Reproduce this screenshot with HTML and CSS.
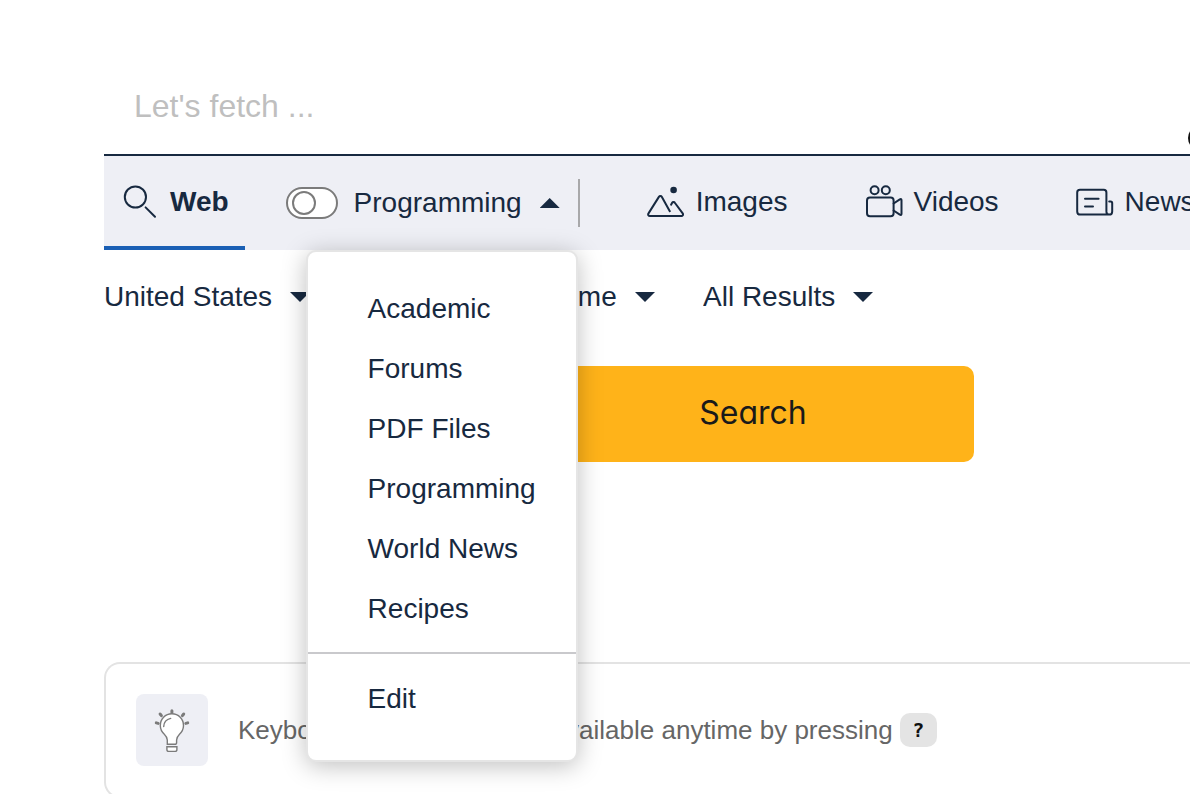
FILE: index.html
```html
<!DOCTYPE html>
<html lang="en">
<head>
<meta charset="utf-8">
<title>Search</title>
<link rel="stylesheet" href="styles.css">
</head>
<body>
<main class="page">
  <form class="search" id="search-form">
    <input class="search-input" type="text" aria-label="Search the web" placeholder="Let's fetch ...">
    <svg class="search-glyph" viewBox="0 0 24 24" aria-hidden="true"><circle cx="12" cy="12" r="10"/></svg>
  </form>

  <nav class="tabs" aria-label="Search types">
    <a class="tab tab-active" href="#web">
      <svg class="icon icon-web" viewBox="0 0 34 34" aria-hidden="true"><circle cx="12.4" cy="12" r="10.6"/><path d="M22.600 22.400l9.400 9.400"/></svg>
      <span>Web</span>
    </a>
    <div class="lens">
      <input class="switch" type="checkbox" role="switch" id="lens-switch" aria-label="Use lens">
      <button class="lens-button" type="button" aria-expanded="true" aria-controls="lens-menu">Programming <span class="caret caret-up"></span></button>
      <div class="menu" id="lens-menu">
        <ul class="menu-list">
          <li><button class="menu-item" type="button">Academic</button></li>
          <li><button class="menu-item" type="button">Forums</button></li>
          <li><button class="menu-item" type="button">PDF Files</button></li>
          <li><button class="menu-item" type="button">Programming</button></li>
          <li><button class="menu-item" type="button">World News</button></li>
          <li><button class="menu-item" type="button">Recipes</button></li>
        </ul>
        <div class="menu-footer"><button class="menu-item" type="button">Edit</button></div>
      </div>
    </div>
    <div class="tab-group">
      <a class="tab" href="#images">
        <svg class="icon" viewBox="0 0 38 34" aria-hidden="true"><path d="M22.800 26.200L14.900 11.900a1.700 1.700 0 0 0-3 0L1.500 28.400a1.700 1.700 0 0 0 1.500 2.700h31.200a1.700 1.700 0 0 0 1.500-2.700L28 18a1.700 1.700 0 0 0-3 0l-.9 1.700"/><circle class="solid" cx="26.600" cy="5" r="3.300"/></svg>
        <span>Images</span>
      </a>
      <a class="tab" href="#videos">
        <svg class="icon" viewBox="0 0 38 34" aria-hidden="true"><circle cx="9.6" cy="5.200" r="4"/><circle cx="20.8" cy="5.200" r="4"/><rect x="2" y="12.4" width="26.6" height="18.8" rx="3"/><path d="M28.6 18.5l6.2-4.2q1.7-.7 1.7 1v13.4q0 1.700-1.700 1l-6.200-4.200"/></svg>
        <span>Videos</span>
      </a>
      <a class="tab" href="#news">
        <svg class="icon icon-news" viewBox="0 0 38 34" aria-hidden="true"><path d="M30.400 26V7.400q0-2.600-2.600-2.600H4q-2.800 0-2.800 2.600v19q0 3.200 3.200 3.200H33.200q-2.800 0-2.800-3.200M33.200 29.600q3 0 3-3.200V18.200q0-1.600-1.600-1.600h-1.400M9 13.700h13.600M9 21.400h8"/></svg>
        <span>News</span>
      </a>
    </div>
  </nav>

  <div class="filters">
    <div class="filter">
      <select class="filter-select" aria-label="Region"><option>United States</option></select>
      <span class="caret"></span>
    </div>
    <div class="filter filter-time">
      <select class="filter-select" aria-label="Time"><option>Any Time</option></select>
      <span class="caret"></span>
    </div>
    <div class="filter">
      <select class="filter-select" aria-label="Results"><option>All Results</option></select>
      <span class="caret"></span>
    </div>
  </div>

  <div class="actions">
    <button class="submit" type="submit" form="search-form">Search</button>
  </div>

  <section class="tip">
    <div class="tip-icon">
      <svg class="bulb" viewBox="0 0 36 44" aria-hidden="true">
        <path class="glass" d="M13.300 35.300V31q0-3-3.200-6.100A11.600 11.600 0 1 1 25.700 24.900q-3.100 3.100-3.100 6.100v2.400q0 1.900-1.900 1.900z"/>
        <path d="M9.700 17.500q.3-6.500 7-8.100"/>
        <path class="glass" d="M12.900 37.800h10v2.700q0 1.900-1.900 1.900h-6.200q-1.900 0-1.900-1.900z"/>
        <path class="rays" d="M17.900 1.800v1.800M6.100 5l1.300 1.700M29.700 5l-1.300 1.700M2.300 13.900l1.900.5M33.700 13.900l-1.900.5"/>
      </svg>
    </div>
    <p class="tip-text">Keyboard shortcuts help is available anytime by pressing <kbd class="key">?</kbd></p>
  </section>
</main>
</body>
</html>
```
FILE: styles.css
```css
*,
*::before {
  box-sizing: border-box;
}

body {
  margin: 0;
  height: 100vh;
  overflow: hidden;
  background: #fff;
  color: #172940;
  font-family: "Liberation Sans", Arial, sans-serif;
  font-size: 28px;
  line-height: 32px;
}

button,
input,
select {
  margin: 0;
  padding: 0;
  border: 0;
  background: none;
  color: inherit;
  font: inherit;
}

.page {
  padding: 58px 0 0 104px;
}

.search {
  position: relative;
  border-bottom: 2px solid #172940;
}

.search-input {
  display: block;
  width: 100%;
  height: 96px;
  padding: 0 30px;
  outline: 0;
  font-size: 32px;
}

.search-input::placeholder {
  color: #bfbfbf;
  opacity: 1;
}

.search-glyph {
  position: absolute;
  right: -22px;
  bottom: 4px;
  width: 24px;
  height: 24px;
  fill: none;
  stroke: #111;
  stroke-width: 4;
}

.tabs {
  display: flex;
  height: 94px;
  background: #eeeff5;
  white-space: nowrap;
}

.tab {
  display: flex;
  align-items: center;
  gap: 11px;
  padding-top: 2px;
  border-bottom: 4px solid transparent;
  color: inherit;
  text-decoration: none;
}

.tab-active {
  gap: 13px;
  padding: 2px 16px 0 19px;
  border-color: #1a5fb4;
  font-weight: bold;
}

.icon {
  flex: none;
  width: 38px;
  height: 34px;
  fill: none;
  stroke: #172940;
  stroke-width: 2;
  stroke-linecap: round;
  stroke-linejoin: round;
}

.icon-web {
  width: 34px;
}

.solid {
  fill: #172940;
  stroke: none;
}

.lens {
  position: relative;
  display: flex;
  align-items: center;
  align-self: center;
  gap: 16px;
  height: 48px;
  margin-left: 41px;
  padding-right: 18px;
  border-right: 2px solid #a8a8aa;
}

.switch {
  display: flex;
  align-items: center;
  width: 52px;
  height: 32px;
  padding-left: 4px;
  border: 2px solid #7b7b7b;
  border-radius: 16px;
  background: #fff;
  appearance: none;
}

.switch::before {
  content: "";
  width: 24px;
  height: 24px;
  border: 2px solid #7b7b7b;
  border-radius: 50%;
}

.lens-button {
  display: flex;
  align-items: center;
  gap: 18px;
}

.caret {
  flex: none;
  width: 20px;
  height: 10px;
  background: #172940;
  clip-path: polygon(0 0, 100% 0, 50% 100%);
}

.caret-up {
  clip-path: polygon(0 100%, 50% 0, 100% 100%);
}

.menu {
  position: absolute;
  z-index: 1;
  top: 71px;
  left: 20px;
  width: 272px;
  padding: 27px 0 31px;
  border: 2px solid #e5e5e5;
  border-radius: 10px;
  background: #fff;
  background-clip: padding-box;
  box-shadow: 0 4px 24px rgba(0, 0, 0, 0.25);
}

.menu-list {
  margin: 0;
  padding: 0;
  list-style: none;
}

.menu-item {
  display: block;
  width: 100%;
  height: 60px;
  padding-left: 60px;
  text-align: left;
}

.menu-footer {
  margin-top: 13px;
  padding-top: 15px;
  border-top: 2px solid #c9c9cc;
}

.tab-group {
  display: flex;
  gap: 77px;
  padding-left: 67px;
}

.filters {
  display: flex;
  gap: 48px;
  padding-top: 31px;
}

.filter {
  display: flex;
  align-items: center;
  gap: 17px;
}

.filter-time {
  margin-left: 142px;
}

.filter-select {
  height: 32px;
  appearance: none;
}

.actions {
  display: flex;
  justify-content: flex-end;
  padding: 53px 216px 0 0;
}

.submit {
  width: 442px;
  height: 96px;
  padding-bottom: 2px;
  border-radius: 10px;
  background: #ffb319;
  color: #1a1a1a;
  font-family: Inter, Lato, sans-serif;
  font-size: 32px;
  font-feature-settings: "cv11";
}

.tip {
  display: flex;
  align-items: center;
  gap: 30px;
  margin-top: 200px;
  padding: 30px;
  border: 2px solid #e3e3e3;
  border-right: 0;
  border-radius: 16px 0 0 16px;
  color: #666;
  font-size: 26px;
  white-space: nowrap;
}

.tip-icon {
  display: flex;
  flex: none;
  align-items: center;
  justify-content: center;
  width: 72px;
  height: 72px;
  padding-top: 2px;
  border-radius: 8px;
  background: #eeeff5;
}

.bulb {
  width: 36px;
  height: 44px;
  fill: none;
  stroke: #7b7b7b;
  stroke-width: 1.4;
  stroke-linecap: round;
}

.glass {
  fill: #fff;
}

.rays {
  stroke-width: 3;
}

.tip-text {
  display: flex;
  align-items: center;
  gap: 7px;
  margin: 0;
}

.key {
  width: 37px;
  height: 34px;
  border-radius: 10px;
  background: #e4e4e4;
  color: #111;
  font: bold 20px/34px "DejaVu Sans Mono", monospace;
  text-align: center;
}
```
